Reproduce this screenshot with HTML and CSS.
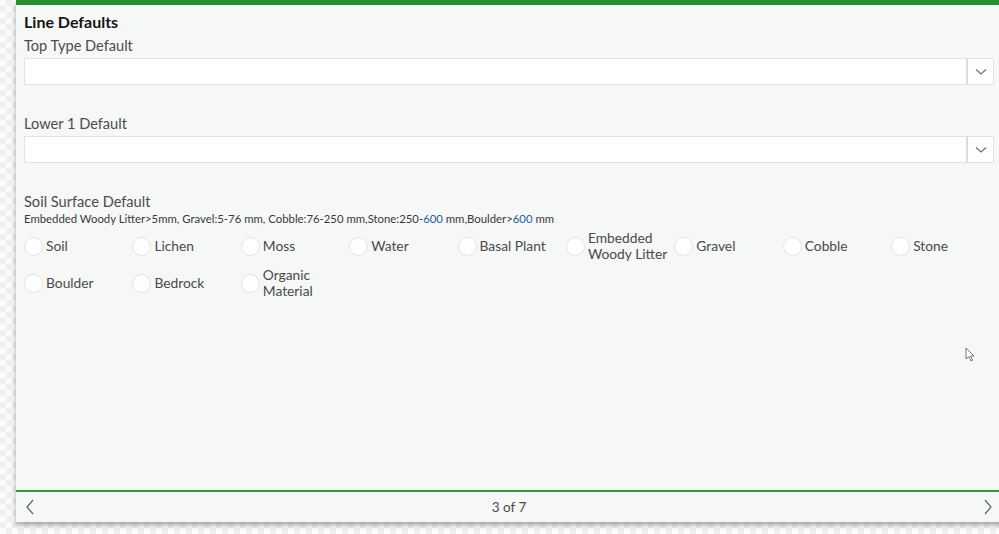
FILE: index.html
```html
<!DOCTYPE html>
<html>
<head>
<meta charset="utf-8">
<link rel="stylesheet" href="styles.css">
</head>
<body>
<div class="panel">
  <div class="topbar"></div>
  <div class="content">
    <h2 class="title">Line Defaults</h2>
    <div class="label first">Top Type Default</div>
    <div class="select">
      <div class="input"></div>
      <div class="btn"><svg width="12" height="8" viewBox="0 0 12 8"><path d="M1 1.5 L6 6 L11 1.5" fill="none" stroke="#6a6f78" stroke-width="1.2"/></svg></div>
    </div>
    <div class="label">Lower 1 Default</div>
    <div class="select">
      <div class="input"></div>
      <div class="btn"><svg width="12" height="8" viewBox="0 0 12 8"><path d="M1 1.5 L6 6 L11 1.5" fill="none" stroke="#6a6f78" stroke-width="1.2"/></svg></div>
    </div>
    <div class="label">Soil Surface Default</div>
    <div class="hint">Embedded Woody Litter&gt;5mm, Gravel:5-76 mm, Cobble:76-250 mm,Stone:250-<span class="num">600</span> mm,Boulder&gt;<span class="num">600</span> mm</div>
    <div class="radios">
      <label class="radio"><span class="circle"></span><span class="txt">Soil</span></label>
      <label class="radio"><span class="circle"></span><span class="txt">Lichen</span></label>
      <label class="radio"><span class="circle"></span><span class="txt">Moss</span></label>
      <label class="radio"><span class="circle"></span><span class="txt">Water</span></label>
      <label class="radio"><span class="circle"></span><span class="txt">Basal Plant</span></label>
      <label class="radio"><span class="circle"></span><span class="txt">Embedded<br>Woody Litter</span></label>
      <label class="radio"><span class="circle"></span><span class="txt">Gravel</span></label>
      <label class="radio"><span class="circle"></span><span class="txt">Cobble</span></label>
      <label class="radio"><span class="circle"></span><span class="txt">Stone</span></label>
      <label class="radio"><span class="circle"></span><span class="txt">Boulder</span></label>
      <label class="radio"><span class="circle"></span><span class="txt">Bedrock</span></label>
      <label class="radio"><span class="circle"></span><span class="txt">Organic<br>Material</span></label>
    </div>
  </div>
  <div class="footer">
    <span class="nav"><svg width="10" height="16" viewBox="0 0 10 16"><path d="M8 1 L2 8 L8 15" fill="none" stroke="#5a6470" stroke-width="1.2"/></svg></span>
    <span class="pager">3 of 7</span>
    <span class="nav"><svg width="10" height="16" viewBox="0 0 10 16"><path d="M2 1 L8 8 L2 15" fill="none" stroke="#5a6470" stroke-width="1.2"/></svg></span>
  </div>
  <svg class="cursor" width="12" height="16" viewBox="0 0 12 16"><path d="M1 1 L1 12 L3.8 9.6 L6 14 L7.6 13.2 L5.5 9 L9 9 Z" fill="#fff" stroke="#666" stroke-width="0.9"/></svg>
</div>
</body>
</html>
```
FILE: styles.css
```css
html, body {
  margin: 0;
  padding: 0;
  width: 999px;
  height: 534px;
  overflow: hidden;
}
body {
  background-color: #fbfbfb;
  background-image: repeating-conic-gradient(#efefef 0 25%, #fbfbfb 0 50%);
  background-size: 12px 12px;
  font-family: Lato, "Open Sans", sans-serif;
}
.panel {
  position: relative;
  margin-left: 16px;
  width: 988px;
  height: 522px;
  background: #f6f7f7;
  box-shadow: 0 3px 5px rgba(0,0,0,0.35);
  display: flex;
  flex-direction: column;
}
.topbar {
  height: 5px;
  background: #2f8a2f;
  flex: none;
}
.content {
  flex: 1;
  padding: 7px 10px 0 8px;
}
.title {
  margin: 0;
  font-size: 16px;
  font-weight: 700;
  line-height: 20px;
  color: #151515;
}
.label {
  font-size: 14.6px;
  line-height: 18px;
  color: #4c4c4c;
  margin-top: 30px;
}
.label.first {
  margin-top: 5px;
}
.select {
  display: flex;
  height: 27px;
  margin-top: 3px;
}
.input {
  flex: 1;
  background: #fff;
  border: 1px solid #e2e2e2;
  border-right: 2px solid #dcdcdc;
}
.btn {
  width: 25px;
  background: #fff;
  border: 1px solid #e2e2e2;
  border-left: none;
  display: flex;
  align-items: center;
  justify-content: center;
}
.btn svg {
  margin-top: 1px;
}
.hint {
  font-size: 11.35px;
  line-height: 14px;
  color: #3a3a3a;
  margin-top: 1px;
}
.num {
  color: #1f5f9a;
}
.radios {
  display: grid;
  grid-template-columns: repeat(9, 108.4px);
  row-gap: 3px;
  margin-top: 3px;
}
.radio {
  display: flex;
  align-items: center;
  min-height: 34px;
  font-size: 13.8px;
  color: #4a4a4a;
}
.circle {
  flex: none;
  width: 17px;
  height: 17px;
  border-radius: 50%;
  background: #fff;
  border: 1px solid #e4e4e4;
  margin-right: 3px;
}
.txt {
  line-height: 16.5px;
}
.footer {
  flex: none;
  height: 30px;
  border-top: 2px solid #3a963a;
  display: flex;
  align-items: center;
  justify-content: space-between;
  padding: 0 11px 0 9px;
}
.nav {
  display: flex;
  align-items: center;
}
.pager {
  font-size: 13.5px;
  color: #4a4a4a;
}
.cursor {
  position: absolute;
  left: 949px;
  top: 347px;
}
```
